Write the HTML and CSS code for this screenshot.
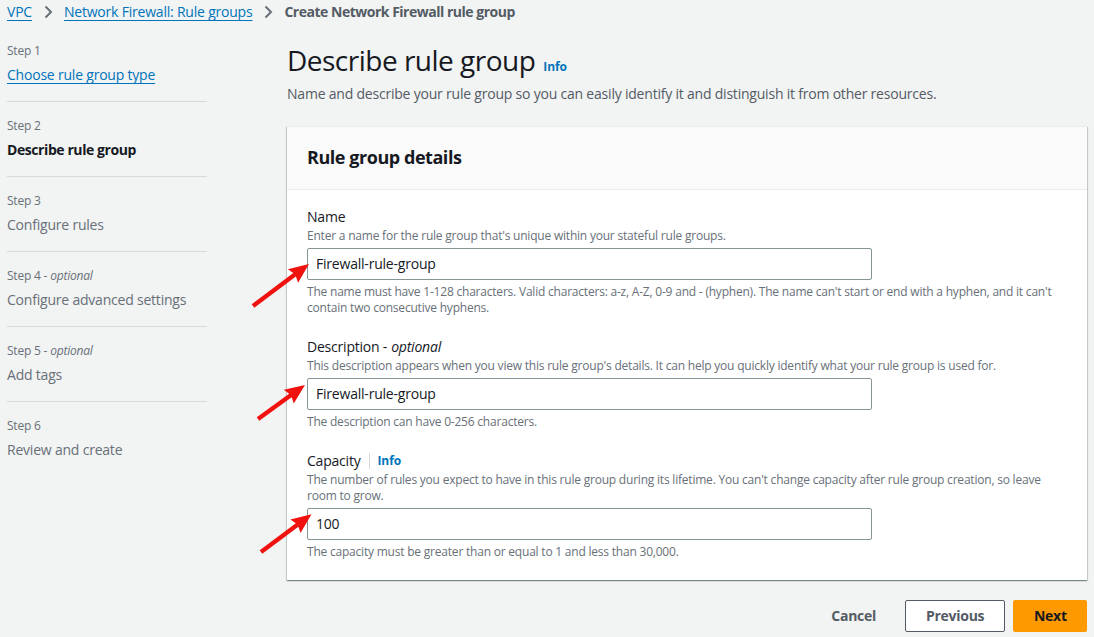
FILE: index.html
```html
<!DOCTYPE html>
<html lang="en">
<head>
<meta charset="utf-8">
<title>Create Network Firewall rule group</title>
<link rel="stylesheet" href="styles.css">
</head>
<body>
<nav class="breadcrumbs">
  <a href="#" class="crumb-link">VPC</a>
  <svg class="chev" viewBox="0 0 16 16" width="16" height="16"><path d="M5.5 2.5l5.5 5.5-5.5 5.5" fill="none" stroke="#687078" stroke-width="2"/></svg>
  <a href="#" class="crumb-link">Network Firewall: Rule groups</a>
  <svg class="chev" viewBox="0 0 16 16" width="16" height="16"><path d="M5.5 2.5l5.5 5.5-5.5 5.5" fill="none" stroke="#687078" stroke-width="2"/></svg>
  <span class="crumb-current">Create Network Firewall rule group</span>
</nav>

<div class="layout">
  <aside class="steps">
    <div class="step">
      <div class="step-num">Step 1</div>
      <a href="#" class="step-link">Choose rule group type</a>
    </div>
    <div class="step">
      <div class="step-num">Step 2</div>
      <div class="step-title current">Describe rule group</div>
    </div>
    <div class="step">
      <div class="step-num">Step 3</div>
      <div class="step-title">Configure rules</div>
    </div>
    <div class="step">
      <div class="step-num">Step 4 - <i>optional</i></div>
      <div class="step-title">Configure advanced settings</div>
    </div>
    <div class="step">
      <div class="step-num">Step 5 - <i>optional</i></div>
      <div class="step-title">Add tags</div>
    </div>
    <div class="step last">
      <div class="step-num">Step 6</div>
      <div class="step-title">Review and create</div>
    </div>
  </aside>

  <main class="main">
    <div class="page-head">
      <h1 class="page-title">Describe rule group</h1>
      <a href="#" class="info">Info</a>
    </div>
    <p class="page-desc">Name and describe your rule group so you can easily identify it and distinguish it from other resources.</p>

    <section class="card">
      <header class="card-head">
        <h2 class="card-title">Rule group details</h2>
      </header>
      <div class="card-body">
        <div class="field">
          <div class="label">Name</div>
          <div class="hint">Enter a name for the rule group that's unique within your stateful rule groups.</div>
          <div class="input">Firewall-rule-group</div>
          <div class="constraint">The name must have 1-128 characters. Valid characters: a-z, A-Z, 0-9 and - (hyphen). The name can't start or end with a hyphen, and it can't contain two consecutive hyphens.</div>
        </div>
        <div class="field">
          <div class="label">Description - <i>optional</i></div>
          <div class="hint">This description appears when you view this rule group's details. It can help you quickly identify what your rule group is used for.</div>
          <div class="input">Firewall-rule-group</div>
          <div class="constraint">The description can have 0-256 characters.</div>
        </div>
        <div class="field">
          <div class="label">Capacity <span class="sep"></span><a href="#" class="info">Info</a></div>
          <div class="hint">The number of rules you expect to have in this rule group during its lifetime. You can't change capacity after rule group creation, so leave room to grow.</div>
          <div class="input">100</div>
          <div class="constraint">The capacity must be greater than or equal to 1 and less than 30,000.</div>
        </div>
      </div>
    </section>

    <div class="actions">
      <button class="btn btn-link">Cancel</button>
      <button class="btn btn-normal">Previous</button>
      <button class="btn btn-primary">Next</button>
    </div>
  </main>
</div>

<svg class="arrows" width="1094" height="637" viewBox="0 0 1094 637">
  <g fill="#f0120f">
    <polygon transform="translate(253,306) rotate(-36.9)" points="0,-2.2 52,-2.2 50,-8.5 70,0 50,8.5 52,2.2 0,2.2"/>
    <polygon transform="translate(258,419) rotate(-35.9)" points="0,-2.2 40,-2.2 38,-8.5 58,0 38,8.5 40,2.2 0,2.2"/>
    <polygon transform="translate(261,552) rotate(-36.7)" points="0,-2.2 45,-2.2 43,-8.5 63,0 43,8.5 45,2.2 0,2.2"/>
  </g>
</svg>
</body>
</html>
```

FILE: styles.css
```css
* { box-sizing: border-box; }
html, body { margin: 0; padding: 0; }
body {
  background: #f2f3f3;
  font-family: "Open Sans", "Noto Sans", sans-serif;
  color: #16191f;
  font-size: 14px;
  letter-spacing: -0.015em;
  width: 1094px;
  height: 637px;
  overflow: hidden;
  position: relative;
}
a { color: #0073bb; text-decoration: none; }

.breadcrumbs {
  display: flex;
  align-items: center;
  height: 24px;
  padding: 0 7px;
  font-size: 14px;
  line-height: 20px;
  gap: 8px;
}
.crumb-link { color: #0073bb; text-decoration: underline; text-underline-offset: 3px; }
.chev { flex: none; }
.crumb-current { font-weight: 700; color: #545b64; letter-spacing: -0.035em; }

.layout {
  display: flex;
  padding: 3px 7px 0 7px;
  gap: 80px;
}
.steps { width: 200px; flex: none; }
.step {
  padding: 16px 0 16px;
  border-bottom: 1px solid #d5dbdb;
}
.step.last { border-bottom: none; }
.step-num {
  font-size: 12px;
  line-height: 16px;
  color: #687078;
  margin-bottom: 6px;
}
.step-num i { font-style: italic; }
.step-link {
  display: inline-block;
  font-size: 14px;
  line-height: 20px;
  color: #0073bb;
  text-decoration: underline;
  text-underline-offset: 3px;
}
.step-title {
  font-size: 14px;
  line-height: 20px;
  color: #687078;
}
.step-title.current { color: #16191f; font-weight: 700; letter-spacing: -0.03em; }

.main { flex: 1; min-width: 0; }
.page-head {
  display: flex;
  align-items: baseline;
  gap: 8px;
  margin-top: 15px;
}
.page-title {
  margin: 0;
  font-size: 28px;
  line-height: 36px;
  font-weight: 400;
  color: #16191f;
  letter-spacing: -0.018em;
}
.info { font-size: 12px; font-weight: 700; color: #0073bb; letter-spacing: -0.01em; }
.page-desc {
  margin: 6px 0 0;
  font-size: 14px;
  line-height: 20px;
  color: #545b64;
}

.card {
  margin-top: 22px;
  background: #fff;
  border-top: 1px solid #eaeded;
  box-shadow: 0 1px 1px 0 rgba(0,28,36,0.3), 1px 1px 1px 0 rgba(0,28,36,0.15), -1px 1px 1px 0 rgba(0,28,36,0.15);
}
.card-head {
  background: #fafafa;
  border-bottom: 1px solid #eaeded;
  height: 63px;
  padding: 0 20px 3px;
  display: flex;
  align-items: center;
}
.card-title {
  margin: 0;
  font-size: 18px;
  line-height: 24px;
  font-weight: 700;
  color: #16191f;
  letter-spacing: -0.025em;
}
.card-body {
  padding: 17px 20px 20px;
  display: flex;
  flex-direction: column;
  gap: 21px;
}
.label {
  font-size: 14px;
  line-height: 20px;
  color: #16191f;
  display: flex;
  align-items: center;
}
.label i { margin-left: 4px; }
.label .sep {
  display: inline-block;
  width: 1px;
  height: 16px;
  background: #d5dbdb;
  margin: 0 8px 0 8px;
}
.hint {
  font-size: 12px;
  line-height: 16px;
  color: #687078;
  margin-top: 1px;
}
.input {
  margin-top: 4px;
  width: 565px;
  height: 32px;
  border: 1px solid #879596;
  border-radius: 2px;
  background: #fff;
  padding: 0 8px;
  font-size: 14px;
  line-height: 30px;
  color: #16191f;
}
.constraint {
  margin-top: 4px;
  font-size: 12px;
  line-height: 16px;
  color: #687078;
}

.actions {
  display: flex;
  justify-content: flex-end;
  align-items: center;
  gap: 8px;
  margin-top: 20px;
}
.btn {
  font-family: inherit;
  font-size: 14px;
  font-weight: 700;
  line-height: 20px;
  height: 32px;
  border-radius: 2px;
  padding: 0 20px;
  letter-spacing: -0.02em;
  cursor: pointer;
}
.btn-link { background: transparent; border: 1px solid transparent; color: #545b64; }
.btn-normal { background: #fff; border: 1px solid #545b64; color: #545b64; width: 100px; }
.btn-primary { background: #ff9900; border: 1px solid #ff9900; color: #16191f; width: 74px; }

.arrows {
  position: absolute;
  left: 0;
  top: 0;
  pointer-events: none;
}
```
